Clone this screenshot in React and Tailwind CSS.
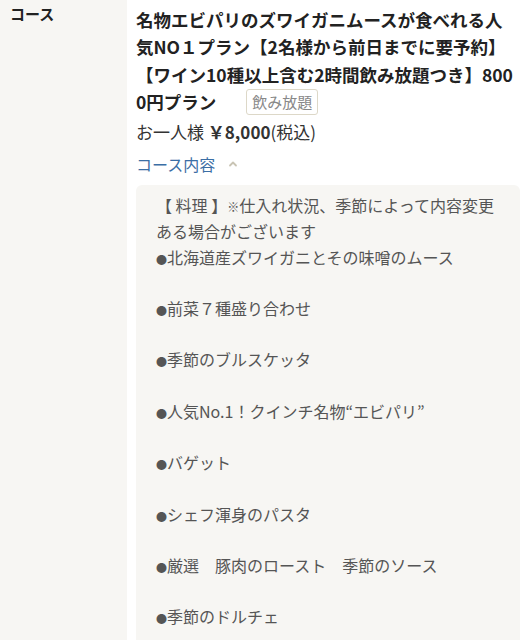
export default function App() {
  const items = [
    "北海道産ズワイガニとその味噌のムース",
    "前菜７種盛り合わせ",
    "季節のブルスケッタ",
    "人気No.1！クインチ名物“エビパリ”",
    "バゲット",
    "シェフ渾身のパスタ",
    "厳選　豚肉のロースト　季節のソース",
    "季節のドルチェ",
  ];

  return (
    <div
      className="flex w-[528px] h-[640px] overflow-hidden bg-white text-[#333]"
      style={{ fontFamily: '"Noto Sans CJK JP", "Noto Sans", sans-serif' }}
    >
      <div className="w-[127px] shrink-0 bg-[#f7f6f3] px-[10px] pt-[2px]">
        <p className="text-[15px] font-bold leading-[24px] text-[#222]">コース</p>
      </div>

      <div className="flex-1 pl-[9px] pr-[8px] pt-[6px]">
        <h2 className="pr-[4px] text-[17.5px] font-bold leading-[27.3px] text-[#222] break-all">
          名物エビパリのズワイガニムースが食べれる人気NO１プラン【2名様から前日までに要予約】【ワイン10種以上含む2時間飲み放題つき】8000円プラン
          <span className="ml-[30px] inline-block rounded-[3px] border border-[#ddd8c8] px-[5px] text-[15px] font-normal leading-[24px] text-[#888] align-[1px]">
            飲み放題
          </span>
        </h2>

        <p className="mt-[4px] text-[17px] leading-[26px]">
          お一人様 <span className="font-bold">￥8,000</span>(税込)
        </p>

        <div className="mt-[6px] flex items-center gap-[12px] text-[16px] leading-[26px] text-[#3b6ea5]">
          <span>コース内容</span>
          <svg width="12" height="12" viewBox="0 0 12 12" fill="none">
            <path d="M3 7.5 L6 4.5 L9 7.5" stroke="#c9c4b4" strokeWidth="1.8" strokeLinecap="round" strokeLinejoin="round" />
          </svg>
        </div>

        <div className="mt-[8px] rounded-[6px] bg-[#f7f6f3] pl-[20px] pr-[12px] pt-[8px] pb-[20px] text-[16px] leading-[25.7px] text-[#555]">
          【 料理 】<span className="text-[12px] leading-none">※</span>仕入れ状況、季節によって内容変更ある場合がございます
          {items.map((t, i) => (
            <span key={i}>
              <br />
              {i > 0 && <br />}
              <span className="text-[11px] leading-none">●</span>
              {t}
            </span>
          ))}
        </div>
      </div>
    </div>
  );
}
